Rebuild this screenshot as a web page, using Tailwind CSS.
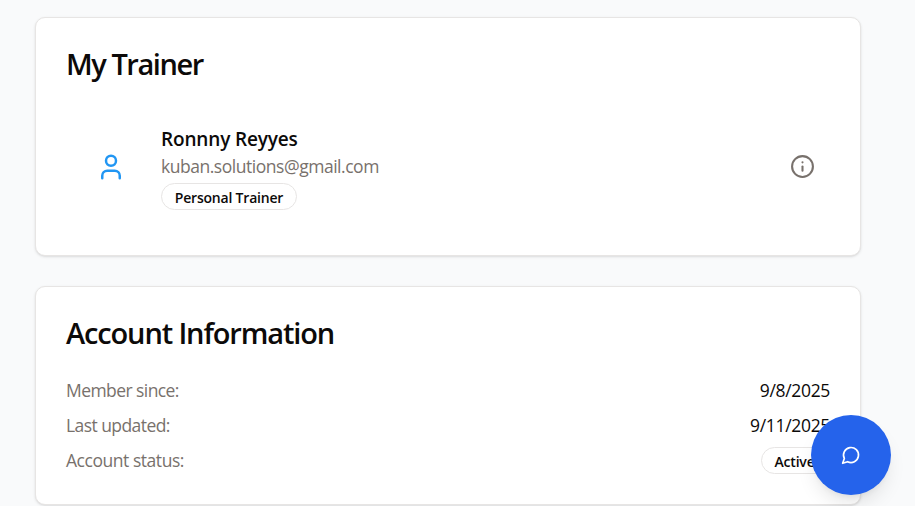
<!DOCTYPE html>
<html lang="en">
<head>
<meta charset="utf-8">
<title>Profile</title>
<script src="https://cdn.jsdelivr.net/npm/@tailwindcss/browser@4"></script>
</head>
<body class="h-[506px] overflow-hidden bg-[#f9fafb] font-['Segoe_UI','Open_Sans',sans-serif] text-[#0c0a09]">
<main class="flex flex-col gap-[30px] pt-[17px] pl-[35px] w-[861px]">
  <section class="h-[239px] rounded-[10px] border border-[#e7e5e4] bg-white px-[30px] pt-[31px] shadow-sm">
    <h2 class="text-[29px] leading-[30px] font-semibold tracking-[-1.45px] whitespace-nowrap">My Trainer</h2>
    <div class="mt-[44px] flex items-center">
      <div class="ml-[30px] w-[65px] shrink-0">
        <svg class="size-[30px]" viewBox="0 0 24 24" fill="none" stroke="#2196f3" stroke-width="2" stroke-linecap="round" stroke-linejoin="round"><path d="M19 21v-2a4 4 0 0 0-4-4H9a4 4 0 0 0-4 4v2"/><circle cx="12" cy="7" r="4"/></svg>
      </div>
      <div class="flex-1">
        <h3 class="h-[31px] pt-px text-[19px] leading-[31px] font-semibold tracking-[-0.15px] whitespace-nowrap">Ronnny Reyyes</h3>
        <p class="text-[17.5px] leading-[25px] tracking-[-0.47px] text-[#78716c]">kuban.solutions@gmail.com</p>
        <div class="mt-[4px] flex h-[27px] w-[136px] items-center justify-center rounded-full border border-[#e7e5e4] pt-px text-[14px] font-semibold tracking-[-0.2px] whitespace-nowrap">Personal Trainer</div>
      </div>
      <svg class="mr-[15px] size-[25px]" viewBox="0 0 24 24" fill="none" stroke="#78716c" stroke-width="2" stroke-linecap="round" stroke-linejoin="round"><circle cx="12" cy="12" r="10"/><path d="M12 16v-4"/><path d="M12 8h.01"/></svg>
    </div>
  </section>
  <section class="h-[219px] rounded-[10px] border border-[#e7e5e4] bg-white px-[30px] pt-[31px] shadow-sm">
    <h2 class="text-[29px] leading-[30px] font-semibold tracking-[-1.14px] whitespace-nowrap">Account Information</h2>
    <div class="mt-[30px] flex flex-col text-[17.5px] leading-[25px] tracking-[-0.5px]">
      <div class="mb-[10px] flex justify-between"><span class="tracking-[-0.57px] text-[#78716c]">Member since:</span><span class="tracking-[-0.33px]">9/8/2025</span></div>
      <div class="mb-[9px] flex justify-between"><span class="tracking-[-0.57px] text-[#78716c]">Last updated:</span><span class="tracking-[-0.33px]">9/11/2025</span></div>
      <div class="flex h-[27px] items-center justify-between"><span class="pb-px tracking-[-0.46px] text-[#78716c]">Account status:</span><span class="flex h-[27px] w-[69px] items-center rounded-full border border-[#e7e5e4] pt-px pl-[12.5px] text-[14px] font-semibold tracking-[-0.2px]">Active</span></div>
    </div>
  </section>
</main>
<button aria-label="Open chat" class="fixed top-[415px] left-[811px] flex size-[80px] items-center justify-center rounded-full bg-[#2563eb] shadow-[0_12px_19px_-4px_rgb(0_0_0/0.1),0_5px_8px_-5px_rgb(0_0_0/0.1)]">
  <svg class="size-[20px]" viewBox="0 0 24 24" fill="none" stroke="#fff" stroke-width="2" stroke-linecap="round" stroke-linejoin="round"><path d="M7.9 20A9 9 0 1 0 4 16.1L2 22Z"/></svg>
</button>
</body>
</html>
